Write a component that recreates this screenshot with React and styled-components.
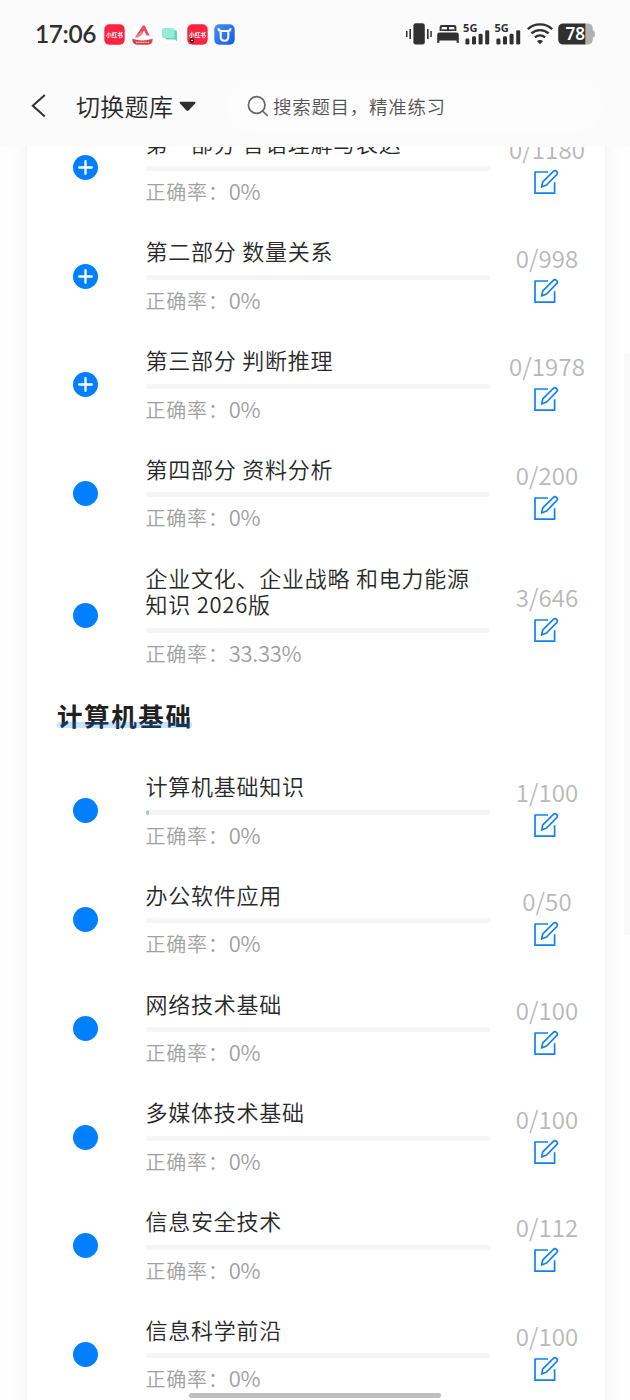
import React from 'react'
import styled, { createGlobalStyle } from 'styled-components'

const GlobalStyle = createGlobalStyle`
    * {
        box-sizing: border-box;
    }

    body {
        margin: 0;
        background: #fefefe;
        font-family: "Noto Sans CJK SC", "Noto Sans", sans-serif;
    }
`

const Screen = styled.div`
    position: relative;
    width: 630px;
    height: 1400px;
    overflow: hidden;
    background: #fefefe;
`

const Header = styled.header`
    position: relative;
    z-index: 2;
    height: 147px;
    background: #fbfbfb;
`

const StatusBar = styled.div`
    height: 68px;
    padding: 0 35px 0 35px;
    display: flex;
    align-items: center;
    justify-content: space-between;
`

const StatusGroup = styled.div`
    display: flex;
    align-items: center;
    gap: ${props => props.$gap}px;
`

const Clock = styled.span`
    width: 62px;
    margin-right: 1px;
    font-family: Lato, sans-serif;
    font-size: 24.5px;
    font-weight: 600;
    line-height: 30px;
    letter-spacing: -0.4px;
    white-space: nowrap;
    color: #303030;
`

const Signal = styled.div`
    width: 26px;
    height: 23px;
    display: flex;
    flex-direction: column;
`

const Network = styled.span`
    margin: -3px 0 -6.5px -1px;
    font-family: "Noto Sans", sans-serif;
    font-size: 11px;
    font-weight: 700;
    line-height: 16px;
    color: #303030;
`

const NavBar = styled.div`
    height: 79px;
    padding: 12px 27px 15px 30px;
    display: flex;
    align-items: center;
`

const Switcher = styled.div`
    width: 150px;
    margin-left: 27px;
    display: flex;
    align-items: center;
    gap: 6px;
    font-size: 24px;
    font-weight: 350;
    line-height: 34px;
    letter-spacing: 0.3px;
    white-space: nowrap;
    color: #282828;
`

const Search = styled.div`
    flex: 1;
    height: 52px;
    padding-left: 21px;
    border-radius: 26px;
    background: #fcfcfc;
    display: flex;
    align-items: center;
    gap: 5px;
    font-size: 18.5px;
    font-weight: 350;
    letter-spacing: 0.7px;
    color: #555;
`

const Card = styled.main`
    width: 578px;
    height: 1320px;
    margin: -34px 0 0 27px;
    background: #fff;
    box-shadow: 0 0 17px rgba(0, 0, 0, 0.065);
`

const Row = styled.div`
    padding: 18px 0;
    display: flex;
    align-items: center;
`

const DotCell = styled.div`
    width: 118.5px;
    padding-left: 46px;
    display: flex;
`

const Dot = styled.div`
    width: 25px;
    height: 25px;
    border-radius: 50%;
    background: #0080ff;
    display: flex;
    align-items: center;
    justify-content: center;
`

const Info = styled.div`
    width: 344px;
`

const Title = styled.div`
    margin-top: -2.5px;
    font-size: 22px;
    font-weight: 350;
    line-height: 26.5px;
    letter-spacing: 0.75px;
    white-space: pre-line;
    color: #282828;
`

const Track = styled.div`
    height: 5px;
    margin: 11px 0 10px;
    border-radius: 3px;
    background: #f5f5f5;
    overflow: hidden;
`

const Fill = styled.div`
    height: 100%;
    border-radius: 3px;
    background: #8fd0d8;
`

const Accuracy = styled.div`
    display: flex;
    align-items: flex-start;
    margin-bottom: 0.75px;
    font-size: 20px;
    font-weight: 350;
    line-height: 22px;
    letter-spacing: 0.8px;
    color: #a0a0a0;
`

const Rate = styled.span`
    font-size: 22px;
    line-height: 19px;
    letter-spacing: -0.3px;
`

const Side = styled.div`
    width: 115px;
    padding-bottom: 4px;
    display: flex;
    flex-direction: column;
    align-items: center;
`

const Count = styled.div`
    font-size: 24px;
    font-weight: 350;
    line-height: 26px;
    margin-bottom: 7px;
    letter-spacing: 0.1px;
    color: #b8b8b8;
`

const Section = styled.div`
    height: 73.25px;
    padding: 16px 0 0 30px;
`

const SectionTitle = styled.h2`
    position: relative;
    width: 136px;
    margin: 0;
    font-size: 25.5px;
    font-weight: 700;
    line-height: 32px;
    letter-spacing: 1.6px;
    white-space: nowrap;
    color: #202020;

    &::after {
        content: "";
        position: absolute;
        left: 0;
        bottom: 3px;
        width: 135px;
        height: 6px;
        border-radius: 3px;
        background: rgba(0, 128, 255, 0.22);
    }
`

const ScrollThumb = styled.div`
    position: absolute;
    top: 354px;
    right: 0;
    width: 6px;
    height: 581px;
    background: #f9f9f9;
`

const HomeBar = styled.div`
    position: absolute;
    left: 189px;
    bottom: 2px;
    width: 252px;
    height: 5px;
    border-radius: 3px;
    background: #bebebe;
`

const RedApp = ({ badge }) => (
  <svg width="21" height="21" viewBox="0 0 21 21">
    <rect x=".3" y=".3" width="20.4" height="20.4" rx="5" fill="#fc2443" />
    <text x="10.5" y="12.6" textAnchor="middle" fontSize="5.6" fontWeight="700" fill="#fff">小红书</text>
    {badge && (
      <>
        <circle cx="5" cy="16.5" r="2.3" fill="#300" />
        <rect x="4.2" y="15.8" width="1.7" height="1.2" fill="#fff" />
      </>
    )}
  </svg>
)

const PeakApp = () => (
  <svg width="21" height="21" viewBox="0 0 21 21">
    <rect x=".3" y=".3" width="20.4" height="20.4" rx="5" fill="#fff" stroke="#f3f3f3" strokeWidth=".6" />
    <path d="M3 13.5 10.6 1.8c.7-1 2-.8 2.5.3l4.5 9.7-3.2-.6-2.3-4.6-3.5 5.3Z" fill="#ef4b5d" />
    <path d="m3 13.5 7-6.2 1 2.4-5.3 4Z" fill="#f78994" />
    <path d="M.4 14.8q10.1 3.2 20.2 0v1c0 3.2-1.8 4.9-5 4.9H5.4c-3.2 0-5-1.7-5-4.9Z" fill="#d9424f" />
    <path d="M4 18.4h13" stroke="#f5bcc1" strokeWidth="1.2" strokeDasharray="1.2 .5" />
  </svg>
)

const ChatApp = () => (
  <svg width="21" height="21" viewBox="0 0 21 21">
    <rect x=".3" y=".3" width="20.4" height="20.4" rx="5" fill="#fff" stroke="#f3f3f3" strokeWidth=".6" />
    <path d="M6 6h10a2 2 0 0 1 2 2v9l-2.5-1.5H8a2 2 0 0 1-2-2Z" fill="#5fd9bd" />
    <rect x="3" y="4" width="12.5" height="10" rx="2" fill="#98ead7" />
  </svg>
)

const BullApp = () => (
  <svg width="21" height="21" viewBox="0 0 21 21">
    <defs>
      <linearGradient id="bull" x1="0" y1="0" x2="1" y2="1">
        <stop offset="0" stopColor="#4b8ee8" />
        <stop offset="1" stopColor="#0c5cf2" />
      </linearGradient>
    </defs>
    <rect x=".3" y=".3" width="20.4" height="20.4" rx="5" fill="url(#bull)" />
    <path d="M4.5 4.2c0 2 .9 2.8 2.8 2.8h6.4c1.9 0 2.8-.8 2.8-2.8M6.7 7v5.7c0 2.6 1.4 4 3.8 4s3.8-1.4 3.8-4V7" fill="none" stroke="#fff" strokeWidth="2.1" />
  </svg>
)

const VibrateIcon = () => (
  <svg width="26" height="22" viewBox="0 0 26 22" fill="#303030">
    <rect x="7.4" y=".2" width="11.4" height="21.4" rx="2.4" />
    <path d="M0 8h1.5v6H0ZM3.4 6H5v10H3.4ZM21 6h1.6v10H21ZM24.3 8h1.5v6h-1.5Z" />
  </svg>
)

const BedIcon = () => (
  <svg width="22" height="20" viewBox="0 0 22 20" fill="#303030">
    <path d="M2.6 7V3.3A2.3 2.3 0 0 1 4.9 1h12.2a2.3 2.3 0 0 1 2.3 2.3V7h-2V4c0-.6-.4-1-1-1H12v3.2h-2V3H5.6c-.6 0-1 .4-1 1v3Z" />
    <path d="M4.5 5.4h13V7h-13Z" />
    <path d="M2.5 8.4h17a2.3 2.3 0 0 1 2.3 2.3v8h-2.2v-2.3H2.4v2.3H.2v-8a2.3 2.3 0 0 1 2.3-2.3Z" />
  </svg>
)

const SignalIcon = () => (
  <Signal>
    <Network>5G</Network>
    <svg width="26" height="16" viewBox="0 0 26 16" fill="#303030">
      <rect x="1.4" y="9.6" width="4" height="6" rx="1.4" />
      <rect x="8" y="7.2" width="4" height="8.4" rx="1.4" />
      <rect x="14.6" y="4.8" width="4" height="10.8" rx="1.4" />
      <rect x="21.2" y="1.2" width="4" height="14.4" rx="1.4" />
    </svg>
  </Signal>
)

const WifiIcon = () => (
  <svg width="26" height="22" viewBox="0 0 26 22" fill="none" stroke="#303030" strokeWidth="2.4">
    <path d="M.8 6.2C7.7-.2 18.3-.2 25.2 6.2M4.4 10.4c5-4.4 12.2-4.4 17.2 0M7.9 14.4c3-2.6 7.2-2.6 10.2 0" />
    <path d="M13 21.3 9.9 18.1c1.8-1.4 4.4-1.4 6.2 0Z" fill="#303030" stroke="none" />
  </svg>
)

const BatteryIcon = () => (
  <svg width="37" height="22" viewBox="0 0 37 22">
    <path d="M27 .4h2.8a5 5 0 0 1 5 5v2c1.2.2 2 1 2 2.2v2.8c0 1.2-.8 2-2 2.2v2a5 5 0 0 1-5 5H27Z" fill="#b0b0b0" />
    <path d="M27.3.4H5.2a5 5 0 0 0-5 5v11.2a5 5 0 0 0 5 5h22.1Z" fill="#303030" />
    <text x="17.2" y="17.3" textAnchor="middle" fontFamily="Noto Sans, sans-serif" fontSize="17" fontWeight="600" fill="#fff">78</text>
  </svg>
)

const BackIcon = () => (
  <svg width="19" height="26" viewBox="0 0 19 26" fill="none" stroke="#303030" strokeWidth="2">
    <path d="M14.8 2 2.8 12.8l12 10.8" />
  </svg>
)

const CaretIcon = () => (
  <svg width="17" height="11" viewBox="0 0 17 11" fill="#303030">
    <path d="M1.6.8h13.8c1.2 0 1.5.9.7 1.7L9.8 9.3c-.8.8-1.7.8-2.5 0L1 2.5C.2 1.7.5.8 1.6.8Z" />
  </svg>
)

const SearchIcon = () => (
  <svg width="21" height="22" viewBox="0 0 21 22" fill="none" stroke="#666" strokeWidth="1.7">
    <circle cx="9.7" cy="10" r="8.3" />
    <path d="m15.6 16 4.6 4.5" strokeLinecap="round" />
  </svg>
)

const PlusIcon = () => (
  <svg width="15" height="15" viewBox="0 0 15 15" stroke="#fff" strokeWidth="2.3" strokeLinecap="round">
    <path d="M7.5 1.2v12.6M1.2 7.5h12.6" />
  </svg>
)

const EditIcon = () => (
  <svg width="28" height="26" viewBox="0 0 28 26" fill="none" stroke="#0f80f8" strokeWidth="1.7" strokeLinejoin="round">
    <path d="M15 3H2v21.2h19.6V13.2" />
    <path d="m8.6 18 1.2-5.2L20.4 2.4c1.9-1.9 5.2 1 3.5 3L13.6 16Z" />
  </svg>
)

const parts = [
  { title: '第一部分 言语理解与表达', count: '0/1180', rate: '0%', plus: true },
  { title: '第二部分 数量关系', count: '0/998', rate: '0%', plus: true },
  { title: '第三部分 判断推理', count: '0/1978', rate: '0%', plus: true },
  { title: '第四部分 资料分析', count: '0/200', rate: '0%' },
  { title: '企业文化、企业战略 和电力能源\n知识 2026版', count: '3/646', rate: '33.33%' },
]

const computer = [
  { title: '计算机基础知识', count: '1/100', rate: '0%', progress: 1 },
  { title: '办公软件应用', count: '0/50', rate: '0%' },
  { title: '网络技术基础', count: '0/100', rate: '0%' },
  { title: '多媒体技术基础', count: '0/100', rate: '0%' },
  { title: '信息安全技术', count: '0/112', rate: '0%' },
  { title: '信息科学前沿', count: '0/100', rate: '0%' },
]

const Chapter = ({ item }) => (
  <Row>
    <DotCell>
      <Dot>{item.plus && <PlusIcon />}</Dot>
    </DotCell>
    <Info>
      <Title>{item.title}</Title>
      <Track>
        {item.progress && <Fill style={{ width: `${item.progress}%` }} />}
      </Track>
      <Accuracy>正确率：<Rate>{item.rate}</Rate></Accuracy>
    </Info>
    <Side>
      <Count>{item.count}</Count>
      <EditIcon />
    </Side>
  </Row>
)

function App() {
  return (
    <Screen>
      <GlobalStyle />

      <Header>
        <StatusBar>
          <StatusGroup $gap={6.4}>
            <Clock>17:06</Clock>
            <RedApp />
            <PeakApp />
            <ChatApp />
            <RedApp badge />
            <BullApp />
          </StatusGroup>
          <StatusGroup $gap={5.3}>
            <VibrateIcon />
            <BedIcon />
            <SignalIcon />
            <SignalIcon />
            <WifiIcon />
            <BatteryIcon />
          </StatusGroup>
        </StatusBar>

        <NavBar>
          <BackIcon />
          <Switcher>
            切换题库
            <CaretIcon />
          </Switcher>
          <Search>
            <SearchIcon />
            搜索题目，精准练习
          </Search>
        </NavBar>
      </Header>

      <Card>
        {parts.map(item => <Chapter key={item.title} item={item} />)}
        <Section>
          <SectionTitle>计算机基础</SectionTitle>
        </Section>
        {computer.map(item => <Chapter key={item.title} item={item} />)}
      </Card>

      <ScrollThumb />
      <HomeBar />
    </Screen>
  )
}

export default App
